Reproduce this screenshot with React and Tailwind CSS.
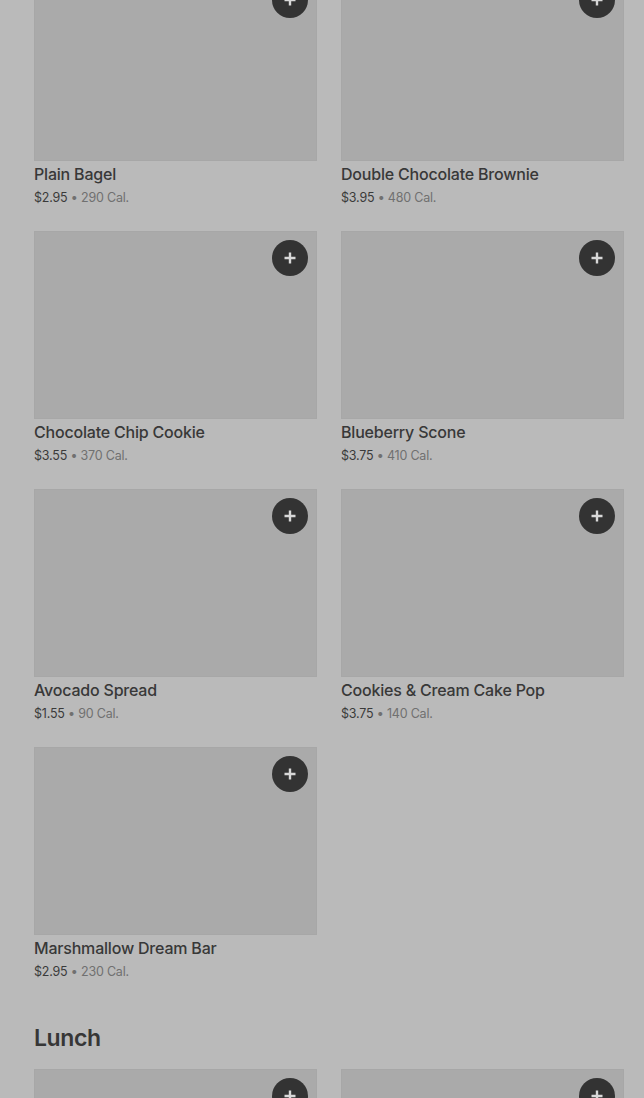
const items = [
  { name: 'Plain Bagel', price: '$2.95', cal: '290 Cal.' },
  { name: 'Double Chocolate Brownie', price: '$3.95', cal: '480 Cal.' },
  { name: 'Chocolate Chip Cookie', price: '$3.55', cal: '370 Cal.' },
  { name: 'Blueberry Scone', price: '$3.75', cal: '410 Cal.' },
  { name: 'Avocado Spread', price: '$1.55', cal: '90 Cal.' },
  { name: 'Cookies & Cream Cake Pop', price: '$3.75', cal: '140 Cal.' },
  { name: 'Marshmallow Dream Bar', price: '$2.95', cal: '230 Cal.' },
]

function PlusButton() {
  return (
    <button className="absolute right-[8px] top-[8px] flex h-9 w-9 items-center justify-center rounded-full bg-[#333333]">
      <svg width="14" height="14" viewBox="0 0 14 14" fill="none">
        <path d="M7 1.5v11M1.5 7h11" stroke="#d8d8d8" strokeWidth="2.4" />
      </svg>
    </button>
  )
}

function Photo() {
  return (
    <div className="relative h-[188px] border border-[#a7a7a7] bg-[#aaaaaa]">
      <PlusButton />
    </div>
  )
}

function ItemCard({ item }) {
  return (
    <div className="flex flex-col">
      <Photo />
      <div className="mt-[2px] text-[16px] font-medium leading-[22px] tracking-[-0.2px] text-[#383838]">
        {item.name}
      </div>
      <div className="mt-[3px] text-[12.5px] leading-[20px] tracking-[-0.2px]">
        <span className="text-[#3a3a3a]">{item.price}</span>
        <span className="text-[#707070]"> • {item.cal}</span>
      </div>
    </div>
  )
}

export default function App() {
  return (
    <div
      className="h-[1098px] overflow-hidden bg-[#bababa] pl-[34px] pr-[20px]"
      style={{ fontFamily: 'Inter, Roboto, sans-serif' }}
    >
      <div className="-mt-[27px] grid grid-cols-2 gap-x-6 gap-y-[23px]">
        {items.map((item) => (
          <ItemCard key={item.name} item={item} />
        ))}
      </div>
      <h2 className="mt-[40px] text-[23px] font-semibold leading-[32px] tracking-[-0.4px] text-[#363636]">
        Lunch
      </h2>
      <div className="mt-[15px] grid grid-cols-2 gap-x-6">
        <Photo />
        <Photo />
      </div>
    </div>
  )
}
